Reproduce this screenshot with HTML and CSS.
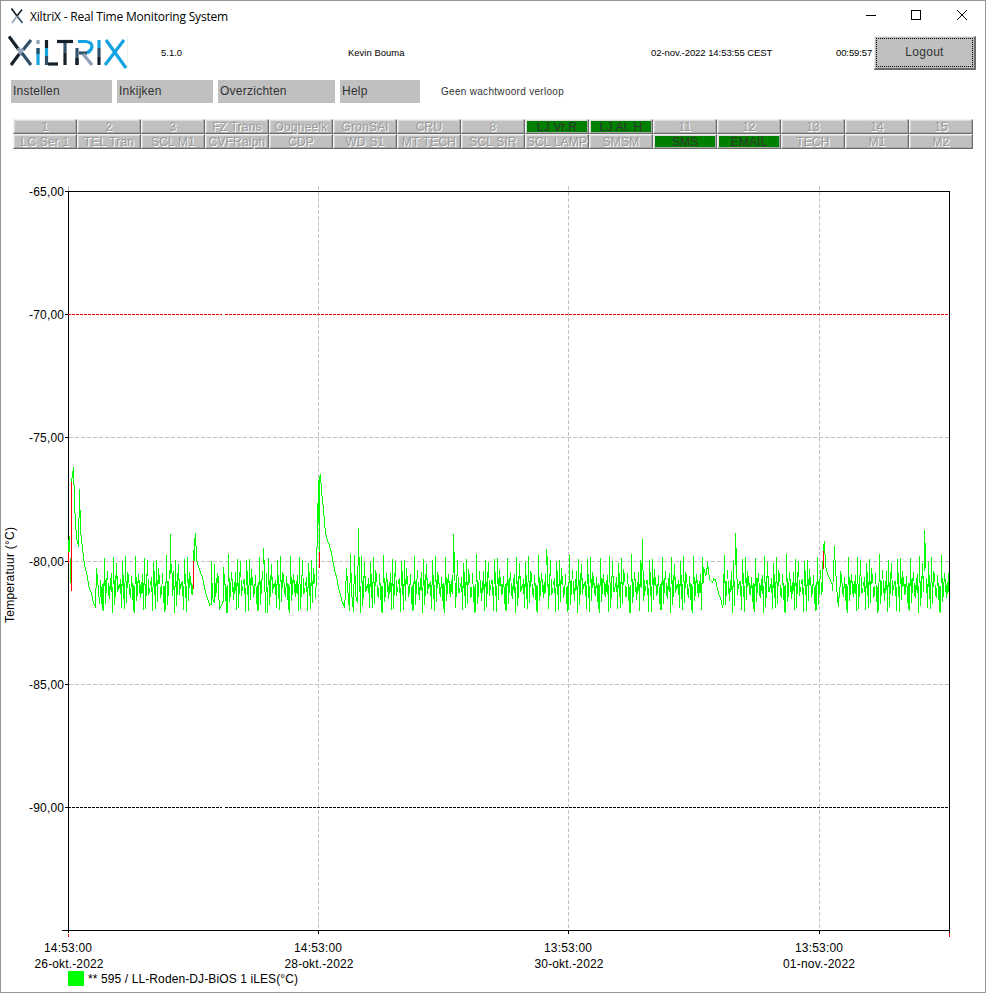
FILE: index.html
```
<!DOCTYPE html>
<html lang="nl">
<head>
    <meta charset="UTF-8">
    <title>XiltriX - Real Time Monitoring System</title>
    <link rel="stylesheet" href="styles.css">
</head>
<body>
    <div class="window">
        <div class="titlebar">
            <svg class="app-icon" width="12" height="16" viewBox="0 0 12 16" fill="none" stroke-width="1.6">
                <path d="M0.5 0.5L6 8" stroke="#15202b"/>
                <path d="M6 8L11.5 15" stroke="#31506a"/>
                <path d="M11 1.5L6 8" stroke="#15202b"/>
                <path d="M6 8L1 15" stroke="#8fa0b8"/>
            </svg>
            <span class="title">XiltriX - Real Time Monitoring System</span>
            <svg class="controls" width="102" height="12" viewBox="0 0 102 12" fill="none" stroke="#000" shape-rendering="crispEdges">
                <path d="M0 5.5H10"/>
                <rect x="45.5" y="0.5" width="9" height="9"/>
                <path d="M91 0L101 10M101 0L91 10" shape-rendering="auto"/>
            </svg>
        </div>

        <div class="header">
            <svg class="logo" width="120" height="34" viewBox="0 0 120 34" fill="none" stroke-width="3.2">
                <path d="M1 1.5L11 15" stroke="#15202b"/>
                <path d="M23 5L15 15" stroke="#31506a"/>
                <path d="M12 18L3 30" stroke="#15202b"/>
                <path d="M10 13L15 20M15 14L11 19" stroke="#8fa0b8"/>
                <path d="M14 18L23 30" stroke="#31506a"/>
                <path d="M30 5V9" stroke="#8fa0b8"/>
                <path d="M30 13V30" stroke="#14a3e0"/>
                <path d="M30 13V19" stroke="#31506a"/>
                <path d="M38.5 5V13" stroke="#15202b"/>
                <path d="M38.5 13V22" stroke="#14a3e0"/>
                <path d="M38.5 21V30" stroke="#31506a"/>
                <path d="M40 29H50" stroke="#15202b"/>
                <path d="M49 6.5H65" stroke="#15202b"/>
                <path d="M57 8V18" stroke="#31506a"/>
                <path d="M57 18V30" stroke="#15202b"/>
                <path d="M69 13V30" stroke="#31506a"/>
                <path d="M69 23V30" stroke="#15202b"/>
                <path d="M70 6.5H78Q84 7 84 12Q83 16 79 18" stroke="#14a3e0"/>
                <path d="M71 18H79" stroke="#31506a"/>
                <path d="M75 19L84 30" stroke="#8fa0b8"/>
                <path d="M91 5V13" stroke="#14a3e0"/>
                <path d="M91 13V22" stroke="#31506a"/>
                <path d="M91 22V30" stroke="#15202b"/>
                <path d="M98 5L118 33M116 5L97 30" stroke="#14a3e0"/>
                <path d="M119.5 1V33" stroke="#eeeeee" stroke-width="1"/>
            </svg>
            <span class="version">5.1.0</span>
            <span class="user">Kevin Bouma</span>
            <span class="date">02-nov.-2022 14:53:55 CEST</span>
            <span class="timer">00:59:57</span>
            <button class="logout"><span>Logout</span></button>
        </div>

        <div class="menu">
            <div class="menu-item instellen">Instellen</div>
            <div class="menu-item inkijken">Inkijken</div>
            <div class="menu-item overzichten">Overzichten</div>
            <div class="menu-item help">Help</div>
            <span class="message">Geen wachtwoord verloop</span>
        </div>

        <div class="channels">
            <div class="channel">1</div>
            <div class="channel">2</div>
            <div class="channel">3</div>
            <div class="channel">FZ Trans</div>
            <div class="channel">Oogheelk</div>
            <div class="channel">GronSAl</div>
            <div class="channel">CRU</div>
            <div class="channel">8</div>
            <div class="channel active">LJ Vr.R</div>
            <div class="channel active">LJ Al. H</div>
            <div class="channel">11</div>
            <div class="channel">12</div>
            <div class="channel">13</div>
            <div class="channel">14</div>
            <div class="channel">15</div>
            <div class="channel">LC Ser 1</div>
            <div class="channel">TEL Tran</div>
            <div class="channel">SCL M1</div>
            <div class="channel">CVFRalph</div>
            <div class="channel">CDP</div>
            <div class="channel">WD S1</div>
            <div class="channel">MT TECH</div>
            <div class="channel">SCL SIR</div>
            <div class="channel">SCL LAMP</div>
            <div class="channel">SMSM</div>
            <div class="channel active">SMS</div>
            <div class="channel active">EMAIL</div>
            <div class="channel">TECH</div>
            <div class="channel">M1</div>
            <div class="channel">M2</div>
        </div>

        <svg class="chart" width="984" height="822" viewBox="1 170 984 822">
            <g class="grid">
                <path d="M69 437.5H949M69 561.5H949M69 684.5H949"/>
                <path d="M318.5 186V930M568.5 186V930M819.5 186V930"/>
                <path class="solid" d="M68.5 186V191"/>
            </g>
            <path class="axis" d="M65 191.5H950M68.5 191V933M949.5 191V936M62 930.5H950M65 314.5H69M65 437.5H69M65 561.5H69M65 684.5H69M65 807.5H69M318.5 930V934M568.5 930V934M819.5 930V934"/>
            <path class="limit-high" d="M68 314.5H222M225 314.5H949"/>
            <path class="limit-low" d="M68 807.5H222M225 807.5H949"/>
            <path class="series" id="series"/>
            <path class="alarm" d="M68.5 552V563M71.5 482V591M193.5 561V589M319.5 552V568M823.5 551V569M68.5 934V937M949.5 933V937"/>
            <g class="y-labels">
                <text x="64" y="196" textLength="35">-65,00</text>
                <text x="64" y="319" textLength="35">-70,00</text>
                <text x="64" y="442" textLength="35">-75,00</text>
                <text x="64" y="566" textLength="35">-80,00</text>
                <text x="64" y="689" textLength="35">-85,00</text>
                <text x="64" y="812" textLength="35">-90,00</text>
            </g>
            <g class="x-labels">
                <text x="68" y="952" textLength="48">14:53:00</text>
                <text x="69" y="968" textLength="69">26-okt.-2022</text>
                <text x="318" y="952" textLength="48">14:53:00</text>
                <text x="319" y="968" textLength="69">28-okt.-2022</text>
                <text x="568" y="952" textLength="48">13:53:00</text>
                <text x="569" y="968" textLength="69">30-okt.-2022</text>
                <text x="819" y="952" textLength="48">13:53:00</text>
                <text x="819" y="968" textLength="72">01-nov.-2022</text>
            </g>
            <text class="axis-title" transform="translate(14 623) rotate(-90)" textLength="96">Temperatuur (°C)</text>
            <rect class="legend-mark" x="68" y="971" width="16" height="15"/>
            <text x="88" y="983" textLength="210">** 595 / LL-Roden-DJ-BiOS 1 iLES(°C)</text>
        </svg>
    </div>

    <script src="chart.js"></script>
</body>
</html>
```
FILE: styles.css
```
body {
    margin: 0;
    background-color: #fff;
    font-family: "Liberation Sans", Arial, sans-serif;
    font-size: 12px;
    color: #000;
}
.window {
    box-sizing: border-box;
    width: 986px;
    height: 993px;
    border: 1px solid #969696;
    overflow: hidden;
}
.titlebar {
    display: flex;
    align-items: center;
    height: 30px;
    padding: 0 17px 0 10px;
}
.title {
    margin-left: 7px;
    font-family: "Open Sans", "Noto Sans", sans-serif;
    font-size: 12px;
    letter-spacing: -0.19px;
}
.controls {
    margin-left: auto;
}
.header {
    display: flex;
    align-items: center;
    height: 45px;
    padding: 0 9px 0 7px;
    font-size: 9.5px;
    white-space: nowrap;
}
.logo {
    margin: 0 33px 3px 0;
}
.version,
.user,
.date,
.timer {
    flex: none;
    margin-bottom: 3px;
}
.version {
    width: 187px;
}
.user {
    width: 303px;
}
.date {
    width: 185px;
    letter-spacing: -0.06px;
}
.timer {
    width: 38px;
    letter-spacing: -0.1px;
}
.logout {
    box-sizing: border-box;
    flex: none;
    width: 102px;
    height: 34px;
    margin: 0 0 2px auto;
    padding: 1px;
    background-color: #c0c0c0;
    border-style: solid;
    border-width: 1px 2px 2px 1px;
    border-color: #e8e8e8 #6b6b6b #6b6b6b #e8e8e8;
    font-family: inherit;
    font-size: 12px;
    letter-spacing: 0.3px;
    color: #333;
}
.logout span {
    display: block;
    box-sizing: border-box;
    height: 29px;
    border: 1px dotted #000;
    line-height: 27px;
}
.menu {
    display: flex;
    gap: 5px;
    margin-top: 4px;
    padding-left: 10px;
    height: 23px;
    line-height: 23px;
}
.menu-item {
    box-sizing: border-box;
    padding-left: 2px;
    background-color: #c0c0c0;
    color: #333;
    letter-spacing: 0.25px;
}
.instellen {
    width: 101px;
}
.inkijken {
    width: 96px;
}
.overzichten {
    width: 117px;
}
.help {
    width: 80px;
}
.message {
    margin-left: 16px;
    font-size: 10px;
    color: #333;
    letter-spacing: 0.3px;
}
.channels {
    display: grid;
    grid-template-columns: repeat(15, 64px);
    grid-auto-rows: 15px;
    margin: 16px 0 21px 12px;
}
.channel {
    box-sizing: border-box;
    border-style: solid;
    border-width: 1px;
    border-color: #f0f0f0 #6b6b6b #6b6b6b #f0f0f0;
    box-shadow: inset -1px -1px #a8a8a8, inset 1px 1px #dcdcdc;
    background-color: #c0c0c0;
    color: #9a9a9a;
    text-align: center;
    text-shadow: 1px 1px #fff;
    letter-spacing: 0.2px;
    line-height: 15px;
    white-space: nowrap;
}
.active {
    background-color: #008000;
    color: #333;
    text-shadow: none;
}
.chart {
    display: block;
}
.chart path {
    fill: none;
    shape-rendering: crispEdges;
}
.grid path {
    stroke: #c0c0c0;
    stroke-dasharray: 4 2;
}
.grid .solid {
    stroke-dasharray: none;
}
.axis {
    stroke: #000;
}
.limit-high {
    stroke: red;
    stroke-dasharray: 3 1;
}
.limit-low {
    stroke: #000;
    stroke-dasharray: 3 1;
}
.series {
    stroke: #0f0;
}
.alarm {
    stroke: red;
}
.y-labels {
    text-anchor: end;
}
.x-labels {
    text-anchor: middle;
}
.legend-mark {
    fill: #0f0;
}
```
FILE: chart.js
```
// One compressor cycle: top and bottom of the trace per pixel column
const cycle = [
    [584, 612], [556, 584], [579, 603], [580, 595], [572, 581], [581, 594], [586, 599],
    [580, 592], [573, 592], [585, 612], [558, 585], [582, 607], [574, 596], [562, 578],
    [578, 594], [586, 591], [582, 586], [579, 594], [586, 610], [561, 586], [573, 597],
    [584, 610], [558, 584], [580, 602], [570, 586], [575, 584], [585, 596], [586, 596],
    [575, 586], [585, 602], [585, 611]
];

// Door openings and defrosts, keyed by their first column
const events = {
    68: [[540, 552], [536, 552], [558, 583], [478, 591], [471, 478], [467, 485], [485, 513],
        [513, 530], [530, 540], [540, 544], [518, 547], [489, 518], [510, 535], [535, 544],
        [544, 553], [553, 561], [561, 567], [567, 571], [571, 575], [575, 581], [581, 587],
        [587, 590], [590, 592], [592, 596], [596, 601], [601, 604], [604, 606], [588, 608],
        [568, 588], [574, 585], [585, 597], [597, 604], [580, 597]],
    170: [[534, 574], [564, 573], [573, 596]],
    193: [[550, 561], [538, 561], [533, 546], [546, 561], [561, 565], [565, 568], [568, 571],
        [571, 574], [574, 576], [576, 580], [580, 585], [585, 590], [590, 594], [594, 597],
        [597, 600], [600, 603], [603, 606], [604, 605], [561, 605], [583, 599], [599, 602],
        [564, 603], [583, 597], [578, 593], [573, 583], [576, 600], [600, 610], [606, 608],
        [604, 606], [601, 604], [567, 602]],
    263: [[548, 564], [560, 592], [592, 613]],
    316: [[547, 587], [503, 547], [480, 523], [476, 552], [474, 483], [483, 496], [496, 505],
        [505, 516], [516, 528], [528, 535], [535, 539], [539, 542], [542, 544], [544, 548],
        [548, 551], [551, 556], [556, 562], [562, 567], [567, 572], [572, 575], [575, 579],
        [579, 585], [585, 590], [590, 593], [593, 597], [597, 601], [601, 604], [603, 606],
        [600, 608], [581, 600], [568, 581], [576, 593], [593, 605], [583, 611], [554, 583],
        [573, 597], [597, 607], [584, 612], [555, 584], [575, 597], [597, 601], [566, 603],
        [528, 566], [557, 592]],
    453: [[534, 573], [552, 581]],
    546: [[549, 565], [556, 587]],
    641: [[563, 588], [539, 570], [570, 601]],
    703: [[567, 583], [569, 573], [573, 576], [568, 575], [562, 569], [567, 575], [575, 580],
        [580, 581], [581, 582], [581, 583], [578, 581], [579, 580], [579, 582], [582, 587],
        [587, 591], [591, 595], [595, 597], [597, 600], [600, 605], [605, 608], [574, 605]],
    735: [[533, 565], [548, 579]],
    822: [[561, 592], [544, 551], [541, 554], [554, 568], [568, 572], [572, 575], [575, 577],
        [577, 579], [579, 582], [582, 584], [583, 591], [560, 582], [546, 560], [560, 576],
        [576, 592], [592, 603], [597, 607], [587, 598], [571, 587]],
    924: [[530, 571], [543, 568]]
};

const columns = {};
for (let x = 69; x < 949; x++) {
    const [top, bottom] = cycle[(x + 21) % cycle.length];
    // small shift so that the cycles are not identical
    const shift = Math.round(Math.sin(x * 1.7) * 2);
    columns[x] = [top + shift, Math.min(bottom + shift, 613)];
}
for (const start in events) {
    events[start].forEach((range, i) => {
        columns[Number(start) + i] = range;
    });
}

let d = '';
for (const x in columns) {
    const [top, bottom] = columns[x];
    d += `M${x}.5 ${top}V${bottom}`;
}
document.getElementById('series').setAttribute('d', d);
```
